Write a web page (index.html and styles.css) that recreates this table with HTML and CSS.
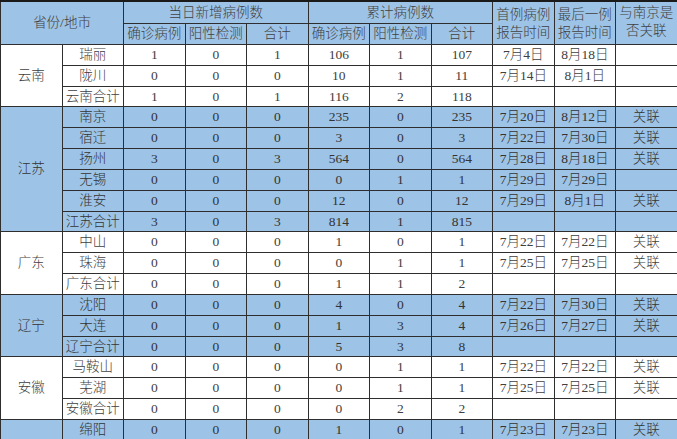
FILE: index.html
```html
<!DOCTYPE html>
<html lang="zh-CN">
<head>
<meta charset="utf-8">
<title>疫情统计表</title>
<link rel="stylesheet" href="styles.css">
</head>
<body>
<table class="stats">
  <colgroup>
    <col span="11" class="col">
  </colgroup>
  <thead>
    <tr class="h1">
      <th colspan="2" rowspan="2" class="hcell">省份/地市</th>
      <th colspan="3">当日新增病例数</th>
      <th colspan="3">累计病例数</th>
      <th rowspan="2" class="hwrap">首例病例<br>报告时间</th>
      <th rowspan="2" class="hwrap">最后一例<br>报告时间</th>
      <th rowspan="2" class="hwrap top">与南京是<br>否关联</th>
    </tr>
    <tr class="h2">
      <th>确诊病例</th><th>阳性检测</th><th>合计</th>
      <th>确诊病例</th><th>阳性检测</th><th>合计</th>
    </tr>
  </thead>
  <tbody class="white">
    <tr><td rowspan="3">云南</td><td>瑞丽</td><td>1</td><td>0</td><td>1</td><td>106</td><td>1</td><td>107</td><td>7月4日</td><td>8月18日</td><td></td></tr>
    <tr><td>陇川</td><td>0</td><td>0</td><td>0</td><td>10</td><td>1</td><td>11</td><td>7月14日</td><td>8月1日</td><td></td></tr>
    <tr><td>云南合计</td><td>1</td><td>0</td><td>1</td><td>116</td><td>2</td><td>118</td><td></td><td></td><td></td></tr>
  </tbody>
  <tbody class="blue">
    <tr><td rowspan="6">江苏</td><td>南京</td><td>0</td><td>0</td><td>0</td><td>235</td><td>0</td><td>235</td><td>7月20日</td><td>8月12日</td><td>关联</td></tr>
    <tr><td>宿迁</td><td>0</td><td>0</td><td>0</td><td>3</td><td>0</td><td>3</td><td>7月22日</td><td>7月30日</td><td>关联</td></tr>
    <tr><td>扬州</td><td>3</td><td>0</td><td>3</td><td>564</td><td>0</td><td>564</td><td>7月28日</td><td>8月18日</td><td>关联</td></tr>
    <tr><td>无锡</td><td>0</td><td>0</td><td>0</td><td>0</td><td>1</td><td>1</td><td>7月29日</td><td>7月29日</td><td></td></tr>
    <tr><td>淮安</td><td>0</td><td>0</td><td>0</td><td>12</td><td>0</td><td>12</td><td>7月29日</td><td>8月1日</td><td>关联</td></tr>
    <tr><td>江苏合计</td><td>3</td><td>0</td><td>3</td><td>814</td><td>1</td><td>815</td><td></td><td></td><td></td></tr>
  </tbody>
  <tbody class="white">
    <tr><td rowspan="3">广东</td><td>中山</td><td>0</td><td>0</td><td>0</td><td>1</td><td>0</td><td>1</td><td>7月22日</td><td>7月22日</td><td>关联</td></tr>
    <tr><td>珠海</td><td>0</td><td>0</td><td>0</td><td>0</td><td>1</td><td>1</td><td>7月25日</td><td>7月25日</td><td>关联</td></tr>
    <tr><td>广东合计</td><td>0</td><td>0</td><td>0</td><td>1</td><td>1</td><td>2</td><td></td><td></td><td></td></tr>
  </tbody>
  <tbody class="blue">
    <tr><td rowspan="3">辽宁</td><td>沈阳</td><td>0</td><td>0</td><td>0</td><td>4</td><td>0</td><td>4</td><td>7月22日</td><td>7月30日</td><td>关联</td></tr>
    <tr><td>大连</td><td>0</td><td>0</td><td>0</td><td>1</td><td>3</td><td>4</td><td>7月26日</td><td>7月27日</td><td>关联</td></tr>
    <tr><td>辽宁合计</td><td>0</td><td>0</td><td>0</td><td>5</td><td>3</td><td>8</td><td></td><td></td><td></td></tr>
  </tbody>
  <tbody class="white">
    <tr><td rowspan="3">安徽</td><td>马鞍山</td><td>0</td><td>0</td><td>0</td><td>0</td><td>1</td><td>1</td><td>7月22日</td><td>7月22日</td><td>关联</td></tr>
    <tr><td>芜湖</td><td>0</td><td>0</td><td>0</td><td>0</td><td>1</td><td>1</td><td>7月25日</td><td>7月25日</td><td>关联</td></tr>
    <tr><td>安徽合计</td><td>0</td><td>0</td><td>0</td><td>0</td><td>2</td><td>2</td><td></td><td></td><td></td></tr>
  </tbody>
  <tbody class="blue">
    <tr><td></td><td>绵阳</td><td>0</td><td>0</td><td>0</td><td>1</td><td>0</td><td>1</td><td>7月23日</td><td>7月23日</td><td>关联</td></tr>
  </tbody>
</table>
</body>
</html>
```

FILE: styles.css
```css
html, body {
  margin: 0;
  padding: 0;
  background: #ffffff;
  overflow: hidden;
}

.stats {
  width: 677px;
  table-layout: fixed;
  border-collapse: collapse;
  font-family: "Liberation Serif", "Noto Sans CJK SC", serif;
  font-size: 13.5px;
  font-weight: 300;
  color: #3a3a3a;
  border-top: 2px solid #1a1a1a;
}

.stats .col {
  width: 61.5px;
}

.stats th,
.stats td {
  border: 1px solid #2e2e2e;
  text-align: center;
  vertical-align: middle;
  padding: 0;
  font-weight: 300;
  line-height: 16px;
  white-space: nowrap;
  overflow: hidden;
}

.stats thead th {
  background: #9dc3e6;
  color: #404040;
}

.stats .h1 th {
  height: 21px;
}

.stats .h2 th {
  height: 20px;
}

.stats .hwrap {
  vertical-align: top;
  padding-top: 4px;
  line-height: 18px;
}

.stats .hwrap.top {
  padding-top: 2px;
}

.stats tbody td {
  height: 19.83px;
}

.stats tbody.blue td {
  background: #9dc3e6;
  color: #333333;
}

.stats tbody.white td {
  background: #ffffff;
  color: #404040;
}
```
